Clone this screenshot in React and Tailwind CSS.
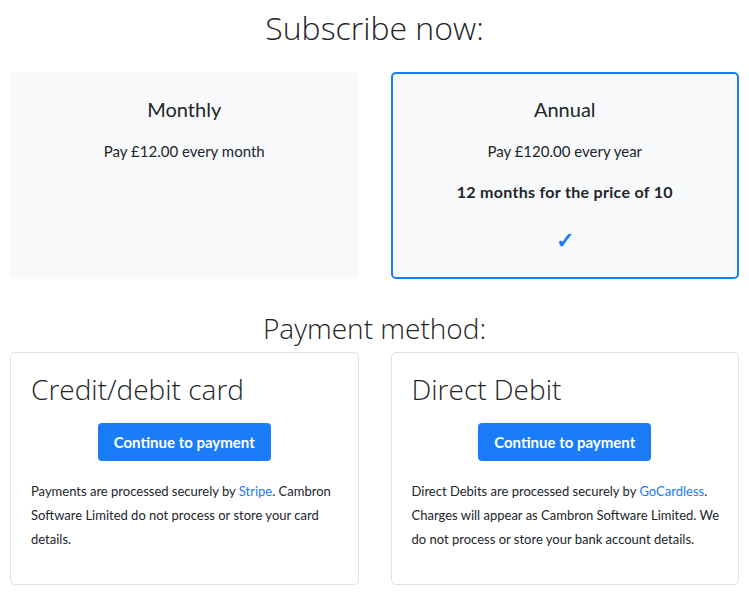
import React from 'react';

const heading = { fontFamily: '"Open Sans", "Noto Sans", sans-serif' };

function PlanCard({ title, price, extra, selected }) {
  return (
    <div
      className={
        'h-[207px] rounded-[5px] bg-[#f8f9fa] flex flex-col items-center ' +
        (selected ? 'border-2 border-[#1a7cf6] pt-[23px]' : 'pt-[25px]')
      }
    >
      <h3 className="text-[20px] leading-6 text-[#212529]">{title}</h3>
      <p className="mt-[20px] text-[15px] leading-5 text-[#212529]">{price}</p>
      {extra && (
        <>
          <p className="mt-[21px] text-[16px] leading-5 font-bold text-[#212529] tracking-[0.3px]">{extra}</p>
          <span className="mt-[26px] text-[22px] leading-6 font-bold text-[#1a7cf6]">✓</span>
        </>
      )}
    </div>
  );
}

function PaymentCard({ title, children }) {
  return (
    <div className="h-[233px] rounded-[5px] border border-[#dee2e6] bg-white pl-[20px] pr-[14px] pt-[18px]">
      <h3 className="text-[28px] leading-9 font-light text-[#212529]" style={heading}>
        {title}
      </h3>
      <div className="flex justify-center mt-[16px] pr-[6px]">
        <button className="h-[38px] px-[16px] rounded-[4px] bg-[#1a7cf6] text-white text-[15px] font-bold">
          Continue to payment
        </button>
      </div>
      <p className="mt-[18px] text-[13px] leading-[24px] text-[#212529]">{children}</p>
    </div>
  );
}

export default function App() {
  return (
    <div className="w-[749px] h-[596px] bg-white px-[10px]" style={{ fontFamily: 'Lato, sans-serif' }}>
      <h1 className="text-center text-[32px] leading-[56px] font-light text-[#212529]" style={heading}>
        Subscribe now:
      </h1>
      <div className="grid grid-cols-2 gap-[32px] mt-[16px]">
        <PlanCard title="Monthly" price="Pay £12.00 every month" />
        <PlanCard
          title="Annual"
          price="Pay £120.00 every year"
          extra="12 months for the price of 10"
          selected
        />
      </div>
      <h2 className="text-center text-[28px] leading-[40px] font-light text-[#212529] mt-[29px]" style={heading}>
        Payment method:
      </h2>
      <div className="grid grid-cols-2 gap-[32px] mt-[4px]">
        <PaymentCard title="Credit/debit card">
          Payments are processed securely by <a className="text-[#1a7cf6]">Stripe</a>. Cambron
          Software Limited do not process or store your card details.
        </PaymentCard>
        <PaymentCard title="Direct Debit">
          Direct Debits are processed securely by <a className="text-[#1a7cf6]">GoCardless</a>.
          Charges will appear as Cambron Software Limited. We do not process or store your bank
          account details.
        </PaymentCard>
      </div>
    </div>
  );
}
